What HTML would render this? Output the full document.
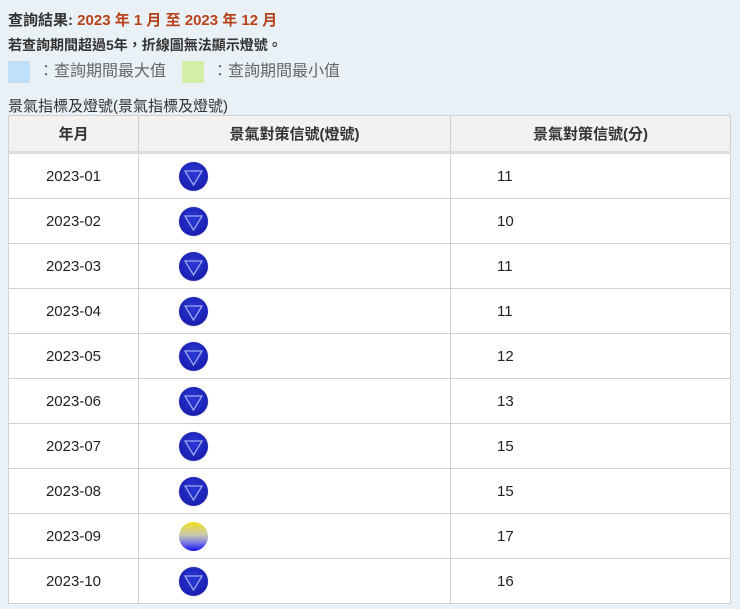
<!DOCTYPE html>
<html><head><meta charset="utf-8"><style>
body{margin:0;background:#e9f0f6;font-family:"Liberation Sans","Noto Sans CJK TC",sans-serif;width:740px;height:609px;overflow:hidden;position:relative;color:#222}
.l1{position:absolute;left:8px;top:9px;font-size:15px;font-weight:bold;color:#333}
.l1 span{color:#b8421a}
.l2{position:absolute;left:8px;top:35px;font-size:14px;font-weight:bold;color:#333}
.leg{position:absolute;top:61px;width:22px;height:22px}
.lt{position:absolute;top:61px;font-size:16px;color:#666;line-height:22px}
.cap{position:absolute;left:8px;top:95px;font-size:15px;color:#333}
table{position:absolute;left:8px;top:115px;border-collapse:collapse;background:#fff;width:722px;table-layout:fixed}
td,th{border:1px solid #d0d0d0;font-size:15px;height:44px;padding:0;font-weight:normal}
th{background:#f2f2f2;height:35px;border-bottom:3px solid #ddd;font-weight:bold;color:#333}
td.c1{text-align:center}
td.c2{padding-left:40px}
td.c3{padding-left:46px}
.b{width:29px;height:29px;border-radius:50%;background:radial-gradient(circle at 50% 40%,#2a3ad8,#1a1fb0 70%,#7a80d0 100%);display:block;position:relative;box-shadow:0 0 1px #88a}
.b svg{position:absolute;left:0;top:0}
.y{width:29px;height:29px;border-radius:50%;background:linear-gradient(#f0e020,#c8c8b0 45%,#8080e0 70%,#1010f0);display:block}
</style></head><body>
<div class="l1">查詢結果: <span>2023 年 1 月 至 2023 年 12 月</span></div>
<div class="l2">若查詢期間超過5年，折線圖無法顯示燈號。</div>
<div class="leg" style="left:8px;background:#bfe0f8"></div><div class="lt" style="left:38px">：查詢期間最大值</div>
<div class="leg" style="left:182px;background:#d3efa8"></div><div class="lt" style="left:212px">：查詢期間最小值</div>
<div class="cap">景氣指標及燈號(景氣指標及燈號)</div>
<table>
<colgroup><col style="width:130px"><col style="width:312px"><col style="width:280px"></colgroup>
<tr><th>年月</th><th>景氣對策信號(燈號)</th><th>景氣對策信號(分)</th></tr>
<tr><td class="c1">2023-01</td><td class="c2"><i class="b"><svg width="29" height="29"><path d="M6 9 L23 9 L14.5 23 Z" fill="none" stroke="#a0a8f0" stroke-width="1.3"/></svg></i></td><td class="c3">11</td></tr>
<tr><td class="c1">2023-02</td><td class="c2"><i class="b"><svg width="29" height="29"><path d="M6 9 L23 9 L14.5 23 Z" fill="none" stroke="#a0a8f0" stroke-width="1.3"/></svg></i></td><td class="c3">10</td></tr>
<tr><td class="c1">2023-03</td><td class="c2"><i class="b"><svg width="29" height="29"><path d="M6 9 L23 9 L14.5 23 Z" fill="none" stroke="#a0a8f0" stroke-width="1.3"/></svg></i></td><td class="c3">11</td></tr>
<tr><td class="c1">2023-04</td><td class="c2"><i class="b"><svg width="29" height="29"><path d="M6 9 L23 9 L14.5 23 Z" fill="none" stroke="#a0a8f0" stroke-width="1.3"/></svg></i></td><td class="c3">11</td></tr>
<tr><td class="c1">2023-05</td><td class="c2"><i class="b"><svg width="29" height="29"><path d="M6 9 L23 9 L14.5 23 Z" fill="none" stroke="#a0a8f0" stroke-width="1.3"/></svg></i></td><td class="c3">12</td></tr>
<tr><td class="c1">2023-06</td><td class="c2"><i class="b"><svg width="29" height="29"><path d="M6 9 L23 9 L14.5 23 Z" fill="none" stroke="#a0a8f0" stroke-width="1.3"/></svg></i></td><td class="c3">13</td></tr>
<tr><td class="c1">2023-07</td><td class="c2"><i class="b"><svg width="29" height="29"><path d="M6 9 L23 9 L14.5 23 Z" fill="none" stroke="#a0a8f0" stroke-width="1.3"/></svg></i></td><td class="c3">15</td></tr>
<tr><td class="c1">2023-08</td><td class="c2"><i class="b"><svg width="29" height="29"><path d="M6 9 L23 9 L14.5 23 Z" fill="none" stroke="#a0a8f0" stroke-width="1.3"/></svg></i></td><td class="c3">15</td></tr>
<tr><td class="c1">2023-09</td><td class="c2"><i class="y"></i></td><td class="c3">17</td></tr>
<tr><td class="c1">2023-10</td><td class="c2"><i class="b"><svg width="29" height="29"><path d="M6 9 L23 9 L14.5 23 Z" fill="none" stroke="#a0a8f0" stroke-width="1.3"/></svg></i></td><td class="c3">16</td></tr>
</table>
</body></html>
